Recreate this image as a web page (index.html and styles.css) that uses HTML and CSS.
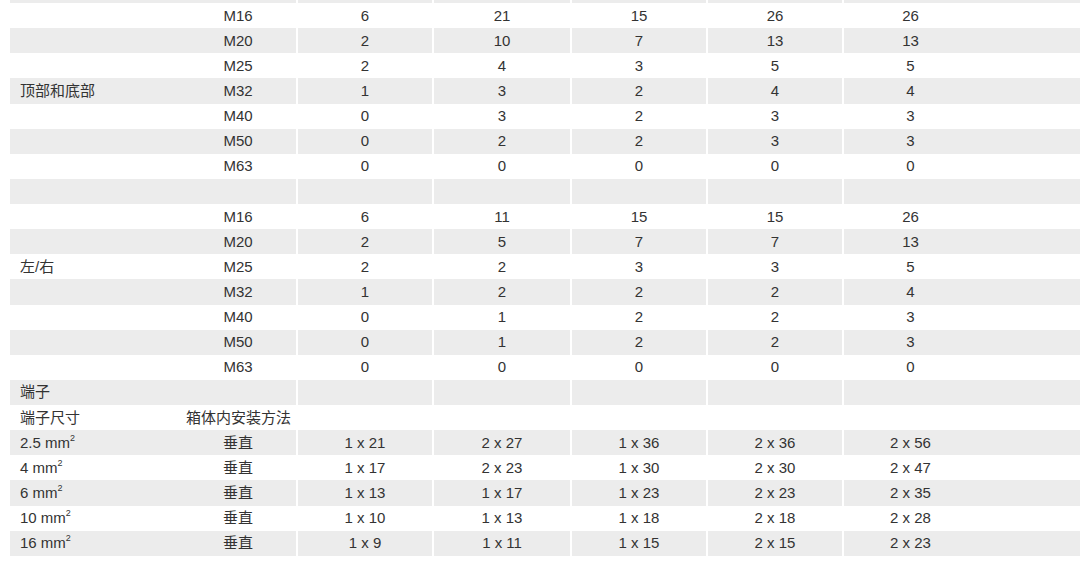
FILE: index.html
```html
<!DOCTYPE html>
<html lang="zh-CN">
<head>
<meta charset="utf-8">
<title>规格表</title>
<link rel="stylesheet" href="styles.css">
</head>
<body>
<table class="spec">
  <colgroup>
    <col class="c-a"><col class="c-b"><col class="c-n"><col class="c-d"><col class="c-n"><col class="c-n"><col class="c-g"><col>
  </colgroup>
  <tbody>
    <tr class="stub"><td></td><td></td><td class="v"></td><td class="v"></td><td class="v"></td><td class="v"></td><td class="v"></td><td></td></tr>
    <tr><td></td><td class="m">M16</td><td class="v">6</td><td class="v">21</td><td class="v">15</td><td class="v">26</td><td class="v">26</td><td></td></tr>
    <tr><td></td><td class="m">M20</td><td class="v">2</td><td class="v">10</td><td class="v">7</td><td class="v">13</td><td class="v">13</td><td></td></tr>
    <tr><td></td><td class="m">M25</td><td class="v">2</td><td class="v">4</td><td class="v">3</td><td class="v">5</td><td class="v">5</td><td></td></tr>
    <tr><td class="lbl">顶部和底部</td><td class="m">M32</td><td class="v">1</td><td class="v">3</td><td class="v">2</td><td class="v">4</td><td class="v">4</td><td></td></tr>
    <tr><td></td><td class="m">M40</td><td class="v">0</td><td class="v">3</td><td class="v">2</td><td class="v">3</td><td class="v">3</td><td></td></tr>
    <tr><td></td><td class="m">M50</td><td class="v">0</td><td class="v">2</td><td class="v">2</td><td class="v">3</td><td class="v">3</td><td></td></tr>
    <tr><td></td><td class="m">M63</td><td class="v">0</td><td class="v">0</td><td class="v">0</td><td class="v">0</td><td class="v">0</td><td></td></tr>
    <tr><td></td><td></td><td class="v"></td><td class="v"></td><td class="v"></td><td class="v"></td><td class="v"></td><td></td></tr>
    <tr><td></td><td class="m">M16</td><td class="v">6</td><td class="v">11</td><td class="v">15</td><td class="v">15</td><td class="v">26</td><td></td></tr>
    <tr><td></td><td class="m">M20</td><td class="v">2</td><td class="v">5</td><td class="v">7</td><td class="v">7</td><td class="v">13</td><td></td></tr>
    <tr><td class="lbl">左/右</td><td class="m">M25</td><td class="v">2</td><td class="v">2</td><td class="v">3</td><td class="v">3</td><td class="v">5</td><td></td></tr>
    <tr><td></td><td class="m">M32</td><td class="v">1</td><td class="v">2</td><td class="v">2</td><td class="v">2</td><td class="v">4</td><td></td></tr>
    <tr><td></td><td class="m">M40</td><td class="v">0</td><td class="v">1</td><td class="v">2</td><td class="v">2</td><td class="v">3</td><td></td></tr>
    <tr><td></td><td class="m">M50</td><td class="v">0</td><td class="v">1</td><td class="v">2</td><td class="v">2</td><td class="v">3</td><td></td></tr>
    <tr><td></td><td class="m">M63</td><td class="v">0</td><td class="v">0</td><td class="v">0</td><td class="v">0</td><td class="v">0</td><td></td></tr>
    <tr><td class="lbl">端子</td><td></td><td class="v"></td><td class="v"></td><td class="v"></td><td class="v"></td><td class="v"></td><td></td></tr>
    <tr><td class="lbl">端子尺寸</td><td class="m method">箱体内安装方法</td><td class="v"></td><td class="v"></td><td class="v"></td><td class="v"></td><td class="v"></td><td></td></tr>
    <tr><td class="lbl">2.5 mm<sup>2</sup></td><td class="m">垂直</td><td class="v">1 x 21</td><td class="v">2 x 27</td><td class="v">1 x 36</td><td class="v">2 x 36</td><td class="v">2 x 56</td><td></td></tr>
    <tr><td class="lbl">4 mm<sup>2</sup></td><td class="m">垂直</td><td class="v">1 x 17</td><td class="v">2 x 23</td><td class="v">1 x 30</td><td class="v">2 x 30</td><td class="v">2 x 47</td><td></td></tr>
    <tr><td class="lbl">6 mm<sup>2</sup></td><td class="m">垂直</td><td class="v">1 x 13</td><td class="v">1 x 17</td><td class="v">1 x 23</td><td class="v">2 x 23</td><td class="v">2 x 35</td><td></td></tr>
    <tr><td class="lbl">10 mm<sup>2</sup></td><td class="m">垂直</td><td class="v">1 x 10</td><td class="v">1 x 13</td><td class="v">1 x 18</td><td class="v">2 x 18</td><td class="v">2 x 28</td><td></td></tr>
    <tr><td class="lbl">16 mm<sup>2</sup></td><td class="m">垂直</td><td class="v">1 x 9</td><td class="v">1 x 11</td><td class="v">1 x 15</td><td class="v">2 x 15</td><td class="v">2 x 23</td><td></td></tr>
  </tbody>
</table>
</body>
</html>
```

FILE: styles.css
```css
html, body {
  margin: 0;
  padding: 0;
  background: #ffffff;
}

body {
  font-family: "Liberation Sans", "Noto Sans CJK SC", sans-serif;
  font-size: 15px;
  color: #333333;
}

.spec {
  margin-left: 10px;
  width: 1070px;
  border-collapse: collapse;
  table-layout: fixed;
}

.c-a { width: 170px; }
.c-b { width: 117px; }
.c-n { width: 136px; }
.c-d { width: 138px; }
.c-g { width: 134px; }

.spec td {
  height: 25.136px;
  padding: 0;
  line-height: 18px;
  vertical-align: middle;
  white-space: nowrap;
  overflow: hidden;
}

.spec tr.stub td {
  height: 3px;
  line-height: 0;
}

.spec tbody tr:nth-child(odd) td {
  background: #ececec;
}

.spec td.v {
  border-left: 2px solid #ffffff;
  text-align: center;
}

.spec td.m {
  text-align: center;
}

.spec td.method {
  text-align: left;
  padding-left: 6px;
  overflow: visible;
}

.spec td.lbl {
  padding-left: 10px;
}

.spec sup {
  font-size: 9px;
  line-height: 0;
  vertical-align: 7px;
}
```
